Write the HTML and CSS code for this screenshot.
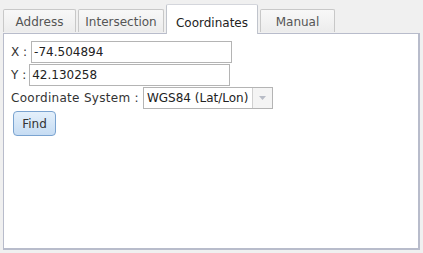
FILE: index.html
```html
<!DOCTYPE html>
<html>
<head>
<meta charset="utf-8">
<link rel="stylesheet" href="styles.css">
</head>
<body>
<div class="widget">
  <div class="tabs">
    <div class="tab">Address</div>
    <div class="tab">Intersection</div>
    <div class="tab active">Coordinates</div>
    <div class="tab">Manual</div>
  </div>
  <div class="panel">
    <div class="row"><span class="lbl">X :</span><input class="txt" type="text" value="-74.504894"></div>
    <div class="row"><span class="lbl">Y :</span><input class="txt ty" type="text" value="42.130258"></div>
    <div class="row sysrow"><span class="lbl sys">Coordinate System :</span>
      <div class="select"><span class="sval">WGS84 (Lat/Lon)</span><span class="arrow"><svg width="7" height="4" viewBox="0 0 7 4"><path d="M0 0H7L3.5 4Z" fill="#b8bcc6"/></svg></span></div>
    </div>
    <div class="btnrow"><button class="find">Find</button></div>
  </div>
</div>
</body>
</html>
```
FILE: styles.css
```css
html, body { margin: 0; padding: 0; }
body {
  background: #f0f0f0;
  width: 423px;
  height: 253px;
  font-family: "DejaVu Sans", sans-serif;
  font-size: 12px;
  color: #333;
  overflow: hidden;
}
.widget {
  padding: 3px 3px 0 3px;
  display: flex;
  flex-direction: column;
}
.tabs {
  display: flex;
  align-items: flex-end;
  height: 30px;
  gap: 2px;
  position: relative;
  z-index: 1;
}
.tab {
  height: 23px;
  box-sizing: border-box;
  border: 1px solid #c8c8c8;
  border-bottom: none;
  border-radius: 2px 2px 0 0;
  background: linear-gradient(#f8f8f8, #ececec);
  color: #555;
  padding: 0;
  line-height: 25px;
  margin-bottom: 1px;
  text-align: center;
}
.tab:nth-child(1) { width: 73px; }
.tab:nth-child(2) { width: 86px; }
.tab.active {
  height: 30px;
  width: 92px;
  background: #fff;
  color: #222;
  margin-bottom: -1px;
  border-color: #c0c4cc;
  border-top-color: #d4d6dc;
  line-height: 36px;
}
.tab:nth-child(4) { width: 75px; }
.panel {
  width: 417px;
  height: 217px;
  box-sizing: border-box;
  background: #fff;
  border: 1px solid #b8bccb;
  border-right-width: 2px;
  border-bottom-width: 2px;
  padding: 7px 0 0 7px;
  display: flex;
  flex-direction: column;
  gap: 1px;
}
.row {
  display: flex;
  align-items: center;
  gap: 3px;
}
.lbl { color: #333; white-space: nowrap; }
.sys { letter-spacing: 0.3px; }
.txt {
  width: 201px;
  height: 22px;
  box-sizing: border-box;
  border: 1px solid #b4b4b4;
  font: inherit;
  color: #222;
  padding: 0 2px;
  margin: 0 0 0 1px;
}
.ty { width: 201px; margin-left: 0; }
.sysrow { gap: 4px; }
.select {
  display: flex;
  width: 130px;
  height: 22px;
  box-sizing: border-box;
  border: 1px solid #b4b4b4;
}
.sval {
  flex: 1;
  padding-left: 3px;
  line-height: 20px;
  color: #222;
  white-space: nowrap;
  overflow: hidden;
}
.arrow {
  width: 19px;
  border-left: 1px solid #d0d0d0;
  background: #f4f4f4;
  display: flex;
  align-items: center;
  justify-content: center;
}
.btnrow { padding: 1px 0 0 2px; }
.find {
  width: 43px;
  height: 25px;
  border: 1px solid #7aa3d0;
  border-radius: 4px;
  background: linear-gradient(#e4f0fb, #c6dcf3);
  font: inherit;
  color: #333;
  padding: 0;
}
```
